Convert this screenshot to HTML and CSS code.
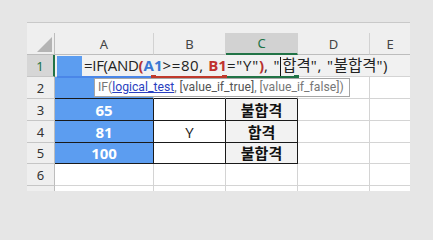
FILE: index.html
```html
<!DOCTYPE html>
<html lang="ko">
<head>
<meta charset="utf-8">
<title>Excel IF AND</title>
<link rel="stylesheet" href="styles.css">
</head>
<body>
<div class="screen">
  <div class="sheet">
    <div class="grid">
      <div class="corner"><span class="tri"></span></div>
      <div class="ch">A</div>
      <div class="ch">B</div>
      <div class="ch ch-active">C</div>
      <div class="ch">D</div>
      <div class="ch ch-last">E</div>

      <div class="rh rh-active">1</div>
      <div class="edit">
        <span class="selblock"></span>
        <span class="formula"><span class="s-fn">=IF(AND</span><span class="paren">(</span><span class="ref-a">A1</span><span class="s-op">&gt;=80, </span><span class="ref-b">B1</span><span class="s-eq">="Y"</span><span class="paren">)</span><span class="s-q">, "</span><span class="caret"></span><span class="kr-f">합격</span><span class="s-q">", "</span><span class="kr-f">불합격</span><span class="s-end">")</span></span>
      </div>

      <div class="rh">2</div>
      <div class="c blue tb-top"></div>
      <div class="c tb-top"></div>
      <div class="c tb-top"></div>
      <div class="c"></div>
      <div class="c c-last"></div>

      <div class="rh">3</div>
      <div class="c blue tb num">65</div>
      <div class="c tb"></div>
      <div class="c tb gray kr">불합격</div>
      <div class="c"></div>
      <div class="c c-last"></div>

      <div class="rh">4</div>
      <div class="c blue tb num">81</div>
      <div class="c tb txt">Y</div>
      <div class="c tb gray kr">합격</div>
      <div class="c"></div>
      <div class="c c-last"></div>

      <div class="rh">5</div>
      <div class="c blue tb num">100</div>
      <div class="c tb"></div>
      <div class="c tb gray kr">불합격</div>
      <div class="c"></div>
      <div class="c c-last"></div>

      <div class="rh">6</div>
      <div class="c"></div>
      <div class="c"></div>
      <div class="c"></div>
      <div class="c"></div>
      <div class="c c-last"></div>

      <div class="rh rh-part"></div>
      <div class="c c-part"></div>
      <div class="c c-part"></div>
      <div class="c c-part"></div>
      <div class="c c-part"></div>
      <div class="c c-part c-last"></div>

      <span class="mark mark-blue-line"></span>
      <span class="mark mark-red-sq1"></span>
      <span class="mark mark-red-line"></span>
      <span class="mark mark-red-sq2"></span>
      <span class="mark mark-green-line"></span>
      <span class="mark mark-green-sq"></span>
      <div class="tooltip">IF(<span class="arg-cur">logical_test</span>, <span class="arg-next">[value_if_true]</span>, [value_if_false])</div>
    </div>
  </div>
</div>
</body>
</html>
```

FILE: styles.css
```css
* { box-sizing: border-box; }
html, body { margin: 0; padding: 0; }
body {
  background: #e6e6e6;
  font-family: "Open Sans", "Noto Sans CJK KR", sans-serif;
  width: 433px;
  height: 214px;
  overflow: hidden;
}
.screen {
  padding: 22px 0 0 27px;
}
.sheet {
  width: 383px;
  background: #efefef;
  border-top: 1px solid #c9c9c9;
  padding-top: 10px;
}
.grid {
  position: relative;
  display: grid;
  grid-template-columns: 28px 99px 72px 72px 72px 40px;
  grid-template-rows: 22px 22px 22px 22px 22px 21px 22px 5px;
}
.corner {
  position: relative;
  border-right: 1px solid #bdbdbd;
  border-bottom: 1px solid #bdbdbd;
}
.tri {
  position: absolute;
  right: 2px;
  bottom: 2px;
  width: 0;
  height: 0;
  border-left: 15px solid transparent;
  border-bottom: 15px solid #b4b4b4;
}
.ch {
  display: flex;
  align-items: center;
  justify-content: center;
  font-size: 13px;
  color: #444;
  border-right: 1px solid #d2d2d2;
  border-bottom: 1px solid #bdbdbd;
  font-family: "Noto Sans", sans-serif;
}
.ch-last { border-right: none; }
.ch-active {
  background: #d2d2d2;
  color: #217346;
  border-bottom: 2px solid #217346;
}
.rh {
  display: flex;
  align-items: center;
  justify-content: center;
  font-size: 13px;
  color: #333;
  border-right: 1px solid #bdbdbd;
  border-bottom: 1px solid #c6c6c6;
  font-family: "Noto Sans", sans-serif;
}
.rh-active {
  background: #d6d6d6;
  color: #217346;
  border-right: 2px solid #217346;
}
.rh-part { border-bottom: none; }
.edit {
  grid-column: 2 / span 5;
  display: flex;
  align-items: center;
  background: #f1f1f1;
  border-bottom: 1px solid #d4d4d4;
  padding-left: 2px;
  white-space: nowrap;
}
.selblock {
  width: 25px;
  height: 20px;
  background: #5c9df0;
  flex: none;
}
.formula {
  margin-left: 2px;
  font-size: 15px;
  color: #222;
  line-height: 18px;
  white-space: pre;
}
.s-fn { letter-spacing: -0.3px; }
.paren { color: #b8312f; font-weight: 700; }
.ref-a { color: #3a78d4; font-weight: 700; }
.s-op { letter-spacing: 0.6px; }
.ref-b { color: #c0312f; font-weight: 700; }
.s-eq { letter-spacing: 0.8px; }
.s-q { letter-spacing: 0.8px; }
.s-end { letter-spacing: 0.5px; }
.kr-f { font-family: "Noto Sans CJK KR", sans-serif; font-size: 15.5px; line-height: 18px; }
.caret { display: inline-block; width: 1px; height: 20px; background: #111; margin-right: 1px; vertical-align: middle; }
.c {
  background: #fff;
  border-right: 1px solid #d4d4d4;
  border-bottom: 1px solid #d4d4d4;
  display: flex;
  align-items: center;
  justify-content: center;
  font-size: 15px;
}
.c-last { border-right: none; }
.c-part { border-bottom: none; }
.blue { background: #5c9df0; }
.tb-top { border-bottom-color: #1a1a1a; }
.tb { border-right-color: #1a1a1a; border-bottom-color: #1a1a1a; }
.gray { background: #f2f2f2; }
.num { color: #fff; font-weight: 700; font-family: "Open Sans", sans-serif; }
.txt { color: #222; font-family: "Open Sans", sans-serif; }
.kr { color: #111; font-weight: 700; font-family: "Noto Sans CJK KR", sans-serif; line-height: 18px; }
.mark { position: absolute; }
.mark-blue-line { left: 30px; top: 43px; width: 94px; height: 2px; background: #4a86e8; }
.mark-red-sq1 { left: 124px; top: 42px; width: 5px; height: 4px; background: #c0392b; }
.mark-red-line { left: 129px; top: 43px; width: 66px; height: 2px; background: #c0392b; }
.mark-red-sq2 { left: 195px; top: 42px; width: 5px; height: 4px; background: #c0392b; }
.mark-green-line { left: 200px; top: 43px; width: 67px; height: 2px; background: #217346; }
.mark-green-sq { left: 267px; top: 42px; width: 5px; height: 4px; background: #217346; }
.tooltip {
  position: absolute;
  left: 67px;
  top: 45px;
  width: 256px;
  height: 19px;
  background: #fff;
  border: 1px solid #a6a6a6;
  font-family: "Roboto", sans-serif;
  font-size: 12.2px;
  line-height: 17px;
  color: #777;
  padding-left: 3px;
  white-space: nowrap;
}
.arg-cur { color: #2a3fbf; text-decoration: underline; }
.arg-next { color: #555; }
```
